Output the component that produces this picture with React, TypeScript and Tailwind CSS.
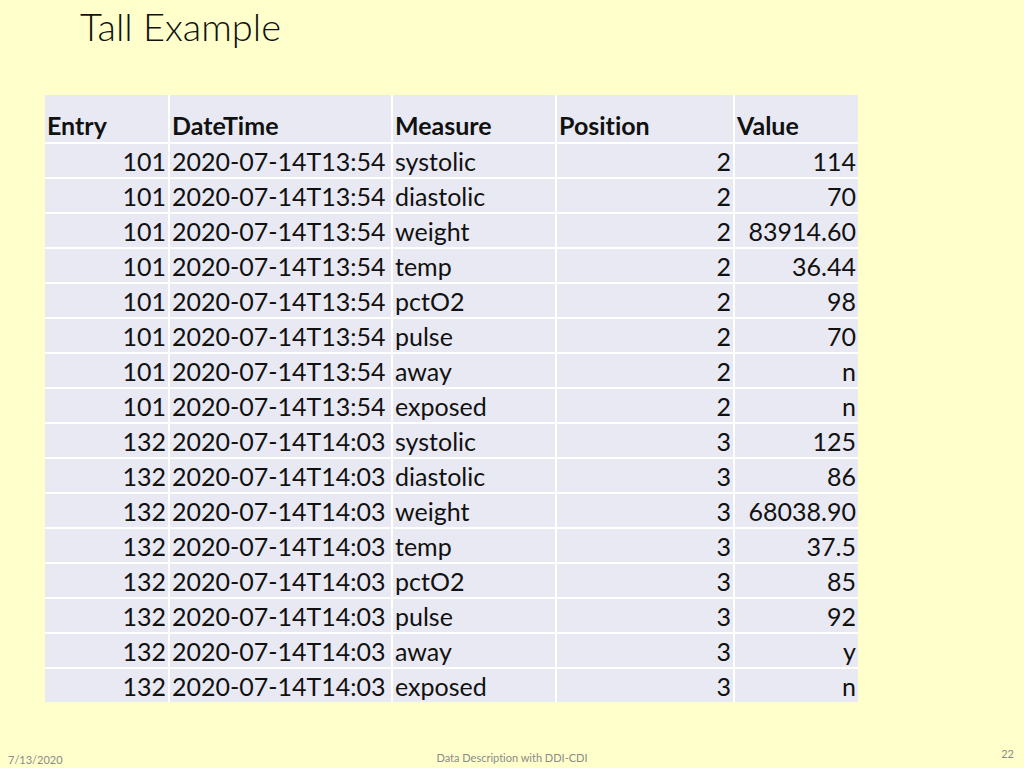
const rows: [string, string, string, string, string][] = [
  ["101", "2020-07-14T13:54", "systolic", "2", "114"],
  ["101", "2020-07-14T13:54", "diastolic", "2", "70"],
  ["101", "2020-07-14T13:54", "weight", "2", "83914.60"],
  ["101", "2020-07-14T13:54", "temp", "2", "36.44"],
  ["101", "2020-07-14T13:54", "pctO2", "2", "98"],
  ["101", "2020-07-14T13:54", "pulse", "2", "70"],
  ["101", "2020-07-14T13:54", "away", "2", "n"],
  ["101", "2020-07-14T13:54", "exposed", "2", "n"],
  ["132", "2020-07-14T14:03", "systolic", "3", "125"],
  ["132", "2020-07-14T14:03", "diastolic", "3", "86"],
  ["132", "2020-07-14T14:03", "weight", "3", "68038.90"],
  ["132", "2020-07-14T14:03", "temp", "3", "37.5"],
  ["132", "2020-07-14T14:03", "pctO2", "3", "85"],
  ["132", "2020-07-14T14:03", "pulse", "3", "92"],
  ["132", "2020-07-14T14:03", "away", "3", "y"],
  ["132", "2020-07-14T14:03", "exposed", "3", "n"],
]

const headers = ["Entry", "DateTime", "Measure", "Position", "Value"]
// numeric columns sit on the right edge of their cell
const alignRight = [true, false, false, true, true]

function App() {
  return (
    <div
      className="relative flex h-[768px] w-[1024px] flex-col overflow-hidden bg-[#ffffcc] text-[#111111] [font-variant-ligatures:none]"
      style={{ fontFamily: "Lato, 'Liberation Sans', sans-serif" }}
    >
      <h1 className="pl-[80px] pt-[2px] text-[38px] font-light leading-[48px]">Tall Example</h1>

      <div className="ml-[45px] mt-[45px] grid w-[813px] grid-cols-[123px_221px_162px_176px_123px] gap-[2px] bg-white">
        {headers.map((h) => (
          <div key={h} className="flex h-[47px] items-end bg-[#e9e9f3] pb-[1px] pl-[2px] text-[25px] font-bold leading-[32px]">
            {h}
          </div>
        ))}
        {rows.map((row, i) =>
          row.map((cell, j) => (
            <div
              key={`${i}-${j}`}
              className={`flex h-[33px] items-end bg-[#e9e9f3] px-[2px] text-[25px] leading-[32px] ${alignRight[j] ? "justify-end" : "justify-start"}`}
            >
              {cell}
            </div>
          ))
        )}
      </div>

      <div className="mt-auto flex items-end justify-between px-[8px] text-[11px] text-[#8a8a8a]">
        <span className="w-[120px]">7/13/2020</span>
        <span className="mb-[2px]">Data Description with DDI-CDI</span>
        <span className="mb-[6px] w-[120px] pr-[2px] text-right">22</span>
      </div>
    </div>
  )
}

export default App
